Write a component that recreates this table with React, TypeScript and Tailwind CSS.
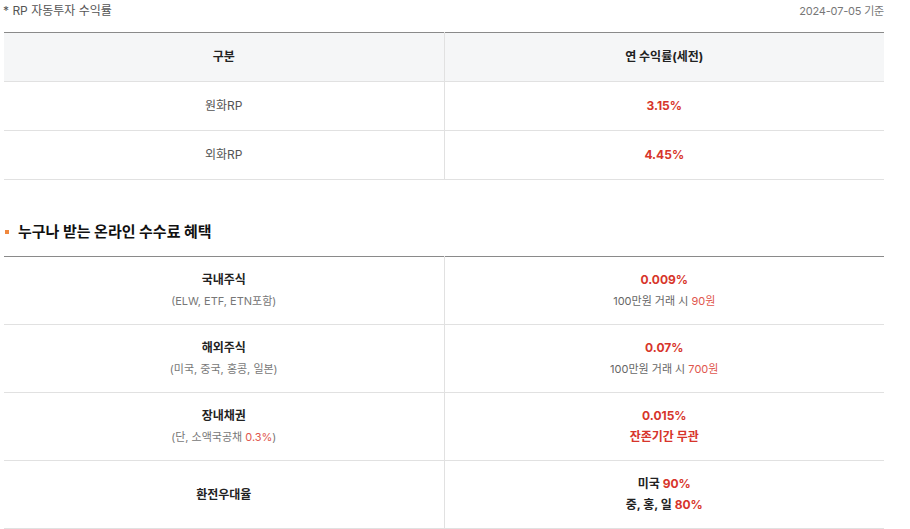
import React from 'react';

const font = { fontFamily: 'Inter, "Noto Sans CJK KR", sans-serif' };

const rpRows = [
  { name: '원화RP', rate: '3.15%' },
  { name: '외화RP', rate: '4.45%' },
];

const Cell: React.FC<{ children: React.ReactNode; left?: boolean; className?: string }> = ({ children, left, className }) => (
  <td className={`text-center align-middle border-b border-[#e1e1e1] ${left ? 'border-r' : ''} ${className || ''}`}>
    {children}
  </td>
);

export default function App() {
  return (
    <div style={font} className="w-[910px] h-[529px] bg-white overflow-hidden text-[12px] text-[#555] pl-1 pr-[26px]">
      {/* RP rate */}
      <div className="flex justify-between items-center h-[22px] -ml-[1px]">
        <span className="text-[12px] text-[#555]">* RP 자동투자 수익률</span>
        <span className="text-[11px] text-[#777] tracking-[-0.2px]">2024-07-05 기준</span>
      </div>
      <table className="w-full mt-[10px] border-t border-[#8a8a8a] border-collapse table-fixed">
        <thead>
          <tr className="bg-[#f5f6f7] h-[49px]">
            <Cell left className="font-bold text-[#222]">구분</Cell>
            <Cell className="font-bold text-[#222]">연 수익률(세전)</Cell>
          </tr>
        </thead>
        <tbody>
          {rpRows.map((r) => (
            <tr key={r.name} className="h-[49px]">
              <Cell left>{r.name}</Cell>
              <Cell className="font-bold text-[#d7352b]">{r.rate}</Cell>
            </tr>
          ))}
        </tbody>
      </table>

      {/* fee benefit */}
      <div className="flex items-center mt-[40px] h-[24px]">
        <span className="w-[4px] h-[4px] bg-[#f0883e] ml-[1px] mr-[9px]" />
        <h3 className="text-[15px] font-bold text-[#111]">누구나 받는 온라인 수수료 혜택</h3>
      </div>
      <table className="w-full mt-[12px] border-t border-[#8a8a8a] border-collapse table-fixed">
        <tbody>
          <tr className="h-[68px]">
            <Cell left>
              <div className="font-bold text-[#222]">국내주식</div>
              <div className="text-[11px] text-[#777] mt-[4px]">(ELW, ETF, ETN포함)</div>
            </Cell>
            <Cell>
              <div className="font-bold text-[#d7352b]">0.009%</div>
              <div className="text-[11px] text-[#666] mt-[4px]">
                100만원 거래 시 <span className="text-[#e0564d]">90원</span>
              </div>
            </Cell>
          </tr>
          <tr className="h-[68px]">
            <Cell left>
              <div className="font-bold text-[#222]">해외주식</div>
              <div className="text-[11px] text-[#777] mt-[4px]">(미국, 중국, 홍콩, 일본)</div>
            </Cell>
            <Cell>
              <div className="font-bold text-[#d7352b]">0.07%</div>
              <div className="text-[11px] text-[#666] mt-[4px]">
                100만원 거래 시 <span className="text-[#e0564d]">700원</span>
              </div>
            </Cell>
          </tr>
          <tr className="h-[68px]">
            <Cell left>
              <div className="font-bold text-[#222]">장내채권</div>
              <div className="text-[11px] text-[#777] mt-[4px]">
                (단, 소액국공채 <span className="text-[#e0564d]">0.3%</span>)
              </div>
            </Cell>
            <Cell>
              <div className="font-bold text-[#d7352b]">0.015%</div>
              <div className="font-bold text-[#d7352b] mt-[3px]">잔존기간 무관</div>
            </Cell>
          </tr>
          <tr className="h-[68px]">
            <Cell left>
              <div className="font-bold text-[#222]">환전우대율</div>
            </Cell>
            <Cell>
              <div className="font-bold text-[#222]">
                미국 <span className="text-[#d7352b]">90%</span>
              </div>
              <div className="font-bold text-[#222] mt-[3px]">
                중, 홍, 일 <span className="text-[#d7352b]">80%</span>
              </div>
            </Cell>
          </tr>
        </tbody>
      </table>
    </div>
  );
}
